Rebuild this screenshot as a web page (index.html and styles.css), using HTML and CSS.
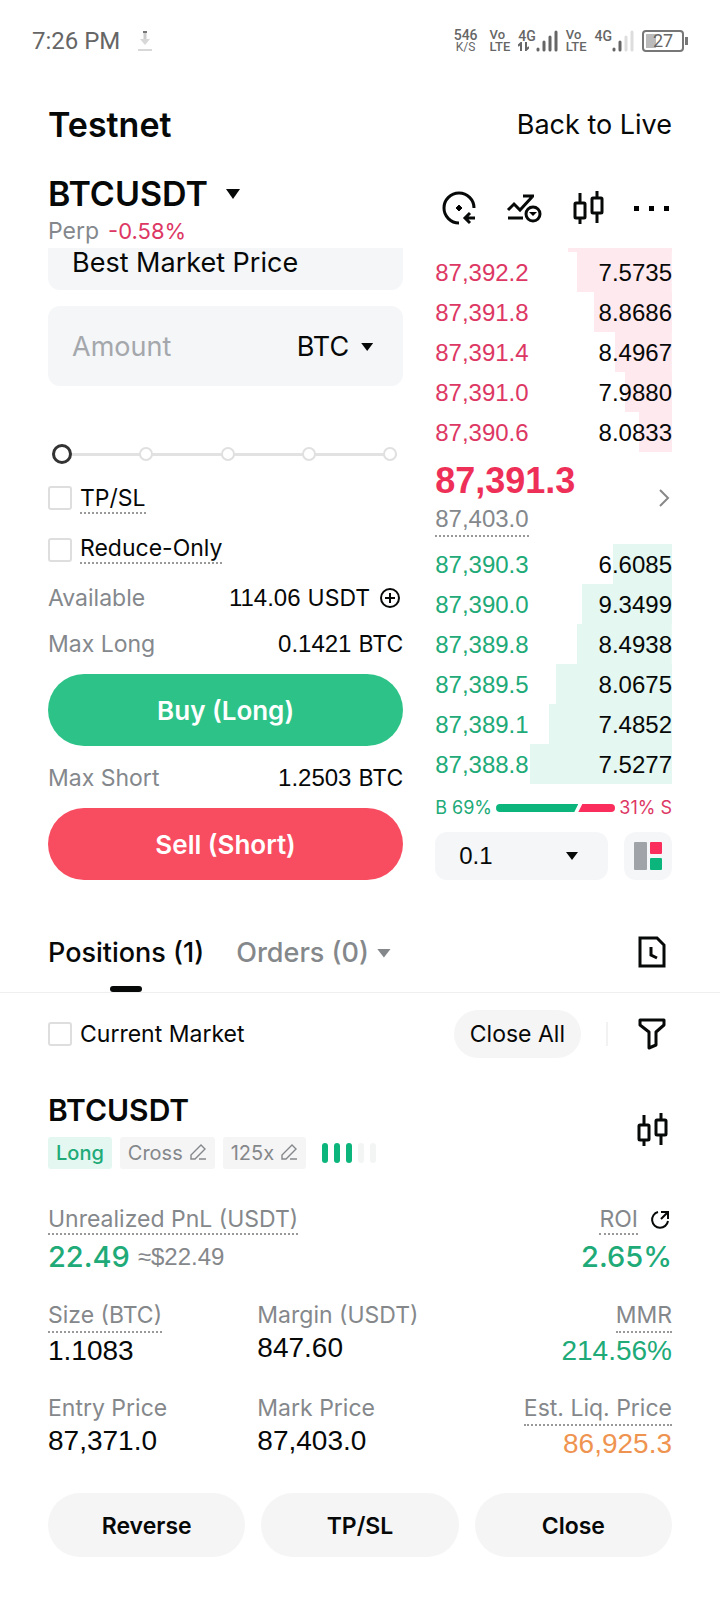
FILE: index.html
```html
<!DOCTYPE html>
<html lang="en">
<head>
<meta charset="utf-8">
<meta name="viewport" content="width=device-width, initial-scale=1">
<title>Testnet BTCUSDT</title>
<link rel="stylesheet" href="styles.css">
</head>
<body>
<svg class="symbols" aria-hidden="true">
  <symbol id="candles" viewBox="0 0 32 34">
    <path d="M8 2v10M8 27v6M25 0v7M25 22v10" /><rect x="3" y="12" width="10" height="15" rx="1"/><rect x="20" y="7" width="10" height="15" rx="1"/>
  </symbol>
  <symbol id="edit" viewBox="0 0 18 18">
    <path stroke-width="1.4" d="M2 15v-4L12 1l4 4L6 15zM10 15h7"/>
  </symbol>
</svg>
<div class="status">
  <span class="time">7:26 PM</span>
  <svg class="download" width="14" height="20" viewBox="0 0 14 20"><path d="M7 1v10" stroke="#ccc" stroke-width="3"/><path d="M2 8h10l-5 6z" fill="#d8d8d8"/><path d="M0 19h14" stroke="#d8d8d8" stroke-width="2"/><path d="M5 1h4" stroke="#777" stroke-width="2"/></svg>
  <div class="radio">
    <span class="speed"><b>546</b><small>K/S</small></span>
    <span class="volte"><span>Vo</span><span>LTE</span></span>
    <span class="cell"><span class="gen"><b>4G</b><svg width="11" height="9" viewBox="0 0 11 9"><path d="M3 9V1L0 4M8 0v8l3-3" fill="none" stroke="#666" stroke-width="2"/></svg></span>
      <svg width="22" height="22" viewBox="0 0 22 22" stroke="#666" stroke-width="3" stroke-linecap="round"><path d="M2 19v1M8 12v8M14 7v13M20 2v18"/></svg></span>
    <span class="volte"><span>Vo</span><span>LTE</span></span>
    <span class="cell"><span class="gen"><b>4G</b></span>
      <svg width="22" height="22" viewBox="0 0 22 22" stroke="#666" stroke-width="3" stroke-linecap="round"><path d="M2 19v1M8 12v8"/><path d="M14 7v13M20 2v18" stroke="#ddd"/></svg></span>
    <span class="battery">27</span>
  </div>
</div>

<header class="top">
  <h1>Testnet</h1>
  <a href="#live">Back to Live</a>
</header>

<section class="market">
  <div>
    <button class="pair">BTCUSDT <i class="caret big"></i></button>
    <div class="change"><span>Perp</span><span class="red">-0.58%</span></div>
  </div>
  <div class="tools">
    <button aria-label="History"><svg width="36" height="36" viewBox="0 0 36 36"><path d="M19 33A15 15 0 1 1 34 18M35 28H25M30 23l-5 5 5 5"/><path d="M19 15l3 3-3 3-3-3z" fill="#000" stroke-width="1"/></svg></button>
    <button aria-label="Indicators"><svg width="36" height="36" viewBox="0 0 36 36"><path d="M2 20l6-6 6 6L26 7M17 6h11M2 28h15"/><circle cx="27" cy="24" r="7"/><path d="M23 22h8l-4 4z" fill="#000" stroke="none"/></svg></button>
    <button aria-label="Chart"><svg width="32" height="34"><use href="#candles"/></svg></button>
    <button aria-label="More"><svg width="36" height="36" viewBox="0 0 36 36"><path d="M0 16h5v5H0zM15 16h5v5h-5zM30 16h5v5h-5z" fill="#000" stroke="none"/></svg></button>
  </div>
</section>

<main class="trade">
  <form class="order">
    <div class="price">Best Market Price</div>
    <div class="amount">
      <input type="text" placeholder="Amount" aria-label="Amount">
      <button type="button">BTC <i class="caret"></i></button>
    </div>
    <div class="slider">
      <div class="stops"><i></i><i></i><i></i><i></i><i></i></div>
      <input type="range" min="0" max="100" value="0" aria-label="Percent">
    </div>
    <label class="check"><input type="checkbox"><span class="hint">TP/SL</span></label>
    <label class="check reduce"><input type="checkbox"><span class="hint">Reduce-Only</span></label>
    <div class="row"><span>Available</span><span class="val"><span class="num">114.06</span> USDT <button type="button" aria-label="Deposit"><svg width="22" height="22" viewBox="0 0 22 22"><circle cx="11" cy="11" r="9"/><path d="M11 6v10M6 11h10"/></svg></button></span></div>
    <div class="row long"><span>Max Long</span><span class="val"><span class="num">0.1421</span> BTC</span></div>
    <button type="button" class="side buy">Buy (Long)</button>
    <div class="row short"><span>Max Short</span><span class="val"><span class="num">1.2503</span> BTC</span></div>
    <button type="button" class="side sell">Sell (Short)</button>
  </form>

  <div class="book">
    <div class="cut"></div>
    <table class="asks">
      <tr style="--depth:40%"><td>87,392.2</td><td>7.5735</td></tr>
      <tr style="--depth:33%"><td>87,391.8</td><td>8.8686</td></tr>
      <tr style="--depth:24%"><td>87,391.4</td><td>8.4967</td></tr>
      <tr style="--depth:20%"><td>87,391.0</td><td>7.9880</td></tr>
      <tr style="--depth:14%"><td>87,390.6</td><td>8.0833</td></tr>
    </table>
    <div class="last">
      <div><strong>87,391.3</strong><span class="hint mark">87,403.0</span></div>
      <svg width="14" height="20" viewBox="0 0 14 20"><path d="M2 2l8 8-8 8" fill="none" stroke="#888" stroke-width="2"/></svg>
    </div>
    <table class="bids">
      <tr style="--depth:25%"><td>87,390.3</td><td>6.6085</td></tr>
      <tr style="--depth:38%"><td>87,390.0</td><td>9.3499</td></tr>
      <tr style="--depth:40%"><td>87,389.8</td><td>8.4938</td></tr>
      <tr style="--depth:49%"><td>87,389.5</td><td>8.0675</td></tr>
      <tr style="--depth:52%"><td>87,389.1</td><td>7.4852</td></tr>
      <tr style="--depth:60%"><td>87,388.8</td><td>7.5277</td></tr>
    </table>
    <div class="ratio"><span class="green">B 69%</span><i class="b" style="flex-grow:69"></i><i class="s" style="flex-grow:31"></i><span class="red">31% S</span></div>
    <div class="depth">
      <div class="step"><select aria-label="Price step"><option>0.1</option></select><i class="caret"></i></div>
      <button type="button" aria-label="Book layout"><svg width="28" height="28" viewBox="0 0 28 28"><rect width="13" height="28" rx="1" fill="#a0a3a7"/><rect x="16" width="12" height="12" rx="1" fill="#fb2d5c"/><rect x="16" y="16" width="12" height="12" rx="1" fill="#0bb57b"/></svg></button>
    </div>
  </div>
</main>

<nav class="tabs">
  <button class="active">Positions (1)</button>
  <button>Orders (0) <i class="caret gray"></i></button>
  <button class="right" aria-label="History"><svg width="28" height="32" viewBox="0 0 28 32"><path d="M2 2h17l7 7v21H2zM13 11v8l6 3"/></svg></button>
</nav>

<section class="filters">
  <label class="check"><input type="checkbox"><span>Current Market</span></label>
  <button class="all">Close All</button>
  <i class="bar"></i>
  <button aria-label="Filter"><svg width="28" height="32" viewBox="0 0 28 32"><path d="M2 2h24v5l-8 7v13l-7 3V14L2 7z" stroke-linejoin="round"/></svg></button>
</section>

<article class="position">
  <div class="head">
    <div>
      <h2>BTCUSDT</h2>
      <div class="tags">
        <span class="tag up">Long</span>
        <button class="tag">Cross <svg width="18" height="18"><use href="#edit"/></svg></button>
        <button class="tag">125x <svg width="18" height="18"><use href="#edit"/></svg></button>
        <span class="level"><i class="on"></i><i class="on"></i><i class="on"></i><i></i><i></i></span>
      </div>
    </div>
    <button aria-label="Chart"><svg width="32" height="34"><use href="#candles"/></svg></button>
  </div>
  <div class="pnl">
    <div><span class="hint">Unrealized PnL (USDT)</span><div class="figure"><b>22.49</b><span>≈$22.49</span></div></div>
    <div class="end"><div class="roi"><span class="hint">ROI</span><button aria-label="Share"><svg width="20" height="20" viewBox="0 0 20 20"><path d="M8 2a8 8 0 1 0 10 9M11 9l6-6M11 2h7v7"/></svg></button></div><div class="figure"><b>2.65%</b></div></div>
  </div>
  <div class="stats">
    <div><span class="hint">Size (BTC)</span><p>1.1083</p></div>
    <div><span>Margin (USDT)</span><p>847.60</p></div>
    <div class="end"><span class="hint">MMR</span><p class="green">214.56%</p></div>
    <div><span>Entry Price</span><p>87,371.0</p></div>
    <div><span>Mark Price</span><p>87,403.0</p></div>
    <div class="end"><span class="hint">Est. Liq. Price</span><p class="orange">86,925.3</p></div>
  </div>
  <div class="actions"><button>Reverse</button><button>TP/SL</button><button>Close</button></div>
</article>
</body>
</html>
```
FILE: styles.css
```css
* { box-sizing: border-box; }
body { margin: 0; padding-bottom: 54px; background: #fff; color: #070808; font: 23px/32px Inter, "Liberation Sans", sans-serif; }
button { border: 0; padding: 0; margin: 0; background: none; color: inherit; font: inherit; display: flex; align-items: center; justify-content: center; }
button svg { fill: none; stroke: #070808; stroke-width: 3; }
svg { display: block; flex: none; }
.symbols { position: absolute; width: 0; height: 0; }
h1, h2, p { margin: 0; font-weight: 600; }
.num { font-family: "Liberation Sans", sans-serif; font-size: 24px; }
.red { color: #dd3764; }
.green { color: #20aa78; }
.caret { width: 12px; height: 8px; background: currentColor; clip-path: polygon(0 0, 100% 0, 50% 100%); }
.caret.big { width: 14px; height: 10px; }
.hint { border-bottom: 2px dotted #999; }

.status { display: flex; align-items: center; height: 82px; padding: 0 36px 0 32px; color: #666; }
.time { font: 24px/32px Roboto, sans-serif; }
.download { margin-left: 18px; }
.radio { display: flex; align-items: center; gap: 8px; margin-left: auto; font: 500 13px/12px Roboto, sans-serif; }
.speed { display: grid; margin-right: 4px; text-align: center; }
.speed b { font-size: 14px; font-weight: 500; }
.speed small { font-size: 12px; font-weight: 400; }
.volte { display: grid; line-height: 12px; }
.cell { display: flex; align-items: flex-end; }
.gen { display: grid; justify-items: start; height: 22px; align-content: start; font-size: 14px; }
.gen b { font-weight: 500; }
.battery { position: relative; width: 42px; height: 22px; border: 2px solid #777; border-radius: 4px; background: linear-gradient(#bbb, #bbb) 2px 2px / 10px 14px no-repeat; font: 18px/18px Roboto, sans-serif; text-align: center; }
.battery::after { content: ""; position: absolute; right: -6px; top: 5px; width: 3px; height: 8px; background: #777; }

.top { display: flex; justify-content: space-between; align-items: center; height: 86px; padding: 0 48px; }
h1 { font-size: 34px; line-height: 40px; }
.top a { color: inherit; text-decoration: none; font-size: 27px; }

.market { display: flex; justify-content: space-between; height: 80px; padding: 4px 48px 0; }
.pair { gap: 18px; font-size: 34px; font-weight: 600; line-height: 44px; }
.change { display: flex; gap: 9px; line-height: 30px; color: #84888c; }
.change .red { font-size: 22px; }
.tools { display: flex; align-items: center; gap: 30px; height: 72px; margin-right: 2px; }

.trade { display: grid; grid-template-columns: minmax(0, 3fr) minmax(0, 2fr); gap: 32px; padding: 0 48px; }
.order { display: flex; flex-direction: column; }
.price { height: 42px; padding: 0 24px; background: #f4f6f8; border-radius: 0 0 12px 12px; font-size: 27px; line-height: 30px; }
.amount { display: flex; align-items: center; height: 80px; margin-top: 16px; padding: 2px 30px 0 24px; background: #f4f6f8; border-radius: 12px; font-size: 27px; }
.amount input { flex: 1; min-width: 0; border: 0; padding: 0; background: none; font: inherit; }
.amount input::placeholder { color: #a4a7ab; }
.amount button { gap: 12px; }
.slider { position: relative; display: grid; margin: 58px 6px 0 4px; height: 20px; }
.stops { position: absolute; inset: 0; display: flex; justify-content: space-between; align-items: center; background: linear-gradient(#e2e2e2, #e2e2e2) center / 100% 3px no-repeat; }
.stops i { width: 14px; height: 14px; border: 2px solid #e0e0e0; border-radius: 50%; background: #fff; }
.stops i:first-child { width: 20px; visibility: hidden; }
.slider input { position: relative; appearance: none; width: 100%; height: 20px; margin: 0; background: none; }
.slider input::-webkit-slider-thumb { appearance: none; width: 20px; height: 20px; border: 3px solid #333; border-radius: 50%; background: #fff; }
.check { display: flex; align-items: flex-start; gap: 8px; line-height: 28px; }
.check input { appearance: none; width: 24px; height: 24px; margin: 0; border: 2px solid #dedede; border-radius: 3px; flex: none; }
.order .check { margin-top: 20px; }
.order .check input { margin-top: 2px; }
.order .check.reduce input { margin-top: 4px; }
.row { display: flex; justify-content: space-between; align-items: center; margin-top: 18px; color: #84888c; }
.row.long { margin-top: 14px; }
.row.short { margin-top: 16px; }
.val { display: flex; align-items: center; gap: 7px; color: #070808; }
.val svg { stroke-width: 2; }
.val button { margin: 0 2px; }
.side { height: 72px; margin-top: 14px; padding-top: 2px; border-radius: 36px; color: #fff; font-size: 26px; font-weight: 600; }
.buy { background: #2dc388; }
.sell { background: #f84d61; }

.cut { height: 4px; margin-left: 56%; background: #feeaee; }
.book table { width: 100%; border-collapse: collapse; font: 24px/38px "Liberation Sans", sans-serif; }
.book td { padding: 2px 0 0; }
.book td + td { text-align: right; }
.asks tr { background: linear-gradient(#feeaee, #feeaee) right / var(--depth) 100% no-repeat; }
.bids tr { background: linear-gradient(#e4f7f0, #e4f7f0) right / var(--depth) 100% no-repeat; }
.asks td:first-child { color: #dd3764; }
.bids td:first-child { color: #20aa78; }
.last { display: flex; justify-content: space-between; align-items: center; height: 92px; font-family: "Liberation Sans", sans-serif; }
.last strong { display: block; color: #ee3058; font-size: 36px; line-height: 44px; }
.mark { display: inline-block; color: #84888c; font-size: 24px; }
.ratio { display: flex; align-items: center; gap: 4px; height: 48px; font-size: 18px; }
.ratio i { height: 8px; }
.ratio .b { background: #0bb57b; border-radius: 4px 0 0 4px; clip-path: polygon(0 0, 100% 0, calc(100% - 4px) 100%, 0 100%); }
.ratio .s { margin-left: -4px; background: #fb2d5c; border-radius: 0 4px 4px 0; clip-path: polygon(4px 0, 100% 0, 100% 100%, 0 100%); }
.depth { display: flex; gap: 16px; }
.step { flex: 1; min-width: 0; display: flex; align-items: center; padding: 0 30px 0 24px; background: #f4f6f8; border-radius: 12px; }
.step select { flex: 1; min-width: 0; appearance: none; border: 0; padding: 0; background: none; color: inherit; font: 24px/32px "Liberation Sans", sans-serif; }
.depth button { width: 48px; height: 48px; border-radius: 12px; background: #f4f6f8; }
.depth button svg { stroke: none; }

.tabs { display: flex; align-items: center; gap: 32px; height: 81px; margin-top: 32px; padding: 0 54px 0 48px; border-bottom: 1px solid #efefef; font-size: 27px; font-weight: 500; }
.tabs button { position: relative; height: 80px; padding-top: 2px; gap: 8px; color: #85888b; }
.tabs .active { color: #070808; }
.tabs .active::after { content: ""; position: absolute; bottom: 0; left: 50%; width: 32px; height: 6px; margin-left: -16px; border-radius: 3px; background: #070808; }
.caret.gray { width: 14px; height: 9px; }
.tabs .right { margin-left: auto; padding: 0; }
.filters { display: flex; align-items: center; height: 81px; padding: 1px 54px 0 48px; }
.filters .check { align-items: center; margin-right: auto; }
.all { height: 48px; padding: 0 16px; border-radius: 24px; background: #f5f5f5; }
.bar { width: 2px; height: 24px; margin: 0 30px 0 25px; background: #f2f2f2; }

.position { padding: 16px 48px 0; }
.head { display: flex; justify-content: space-between; align-items: center; padding-right: 4px; }
h2 { font-size: 30px; line-height: 40px; }
.tags { display: flex; align-items: center; gap: 8px; margin-top: 7px; }
.tag { display: flex; align-items: center; gap: 6px; height: 32px; padding: 0 8px; border-radius: 3px; background: #f5f5f5; color: #85888b; font-size: 20px; }
.tag svg { stroke: #85888b; }
.tag.up { background: #e4f7f0; color: #20aa78; font-weight: 500; }
.level { display: flex; gap: 6px; margin-left: 8px; }
.level i { width: 6px; height: 20px; border-radius: 3px; background: #f3f5f5; }
.level .on { background: #0bb57b; }
.pnl { display: flex; justify-content: space-between; margin-top: 36px; color: #85888b; line-height: 28px; }
.pnl .hint, .stats .hint { display: inline-block; }
.end { text-align: right; }
.roi { display: flex; justify-content: flex-end; gap: 12px; padding-right: 2px; }
.roi svg { stroke-width: 2; }
.figure { display: flex; align-items: center; justify-content: flex-end; gap: 8px; margin-top: 4px; font: 24px/36px "Liberation Sans", sans-serif; }
.pnl > :first-child .figure { justify-content: flex-start; }
.figure b { font: 500 29px/36px Inter, sans-serif; color: #20aa78; }
.stats { display: grid; grid-template-columns: 1fr 1fr 1fr; gap: 24px 4px; margin-top: 25px; color: #85888b; line-height: 30px; }
.stats .hint { padding-bottom: 1px; vertical-align: top; }
.stats p { color: #070808; font: 28px/36px "Liberation Sans", sans-serif; }
.stats .green { color: #20aa78; }
.stats .orange { color: #ef9450; }
.actions { display: grid; grid-template-columns: 1fr 1fr 1fr; gap: 16px; margin-top: 31px; }
.actions button { height: 64px; padding-top: 2px; border-radius: 32px; background: #f5f5f5; font-weight: 600; }
```
